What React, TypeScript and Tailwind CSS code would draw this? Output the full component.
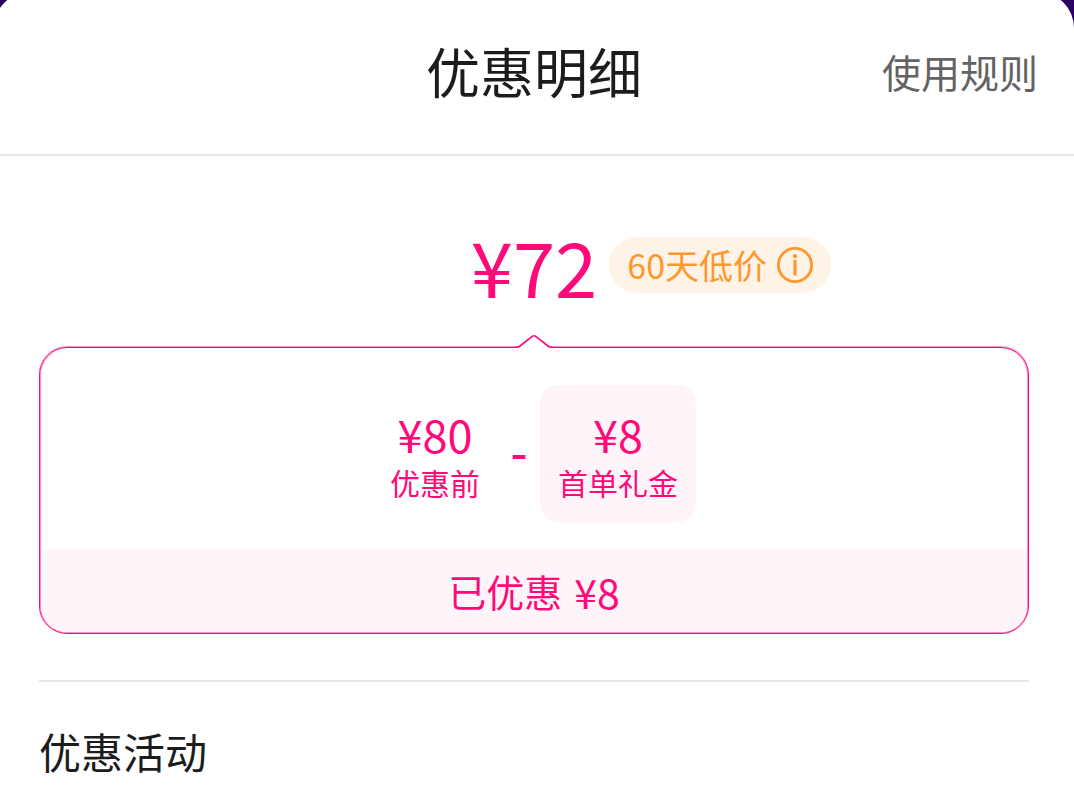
const cjk = "font-['Noto_Sans_CJK_SC','Noto_Sans',sans-serif]";

function InfoIcon() {
  return (
    <svg viewBox="0 0 36 36" className="size-9" fill="none" stroke="#ff982c" aria-hidden="true">
      <circle cx="18" cy="18" r="16.6" strokeWidth="2.8" />
      <path d="M18 14v13.200" strokeWidth="3.2" strokeLinecap="round" />
      <circle cx="18" cy="9.200" r="2.1" fill="#ff982c" stroke="none" />
    </svg>
  );
}

function PriceItem({ amount, label, active }: { amount: string; label: string; active?: boolean }) {
  return (
    <div
      className={`flex flex-col items-center rounded-[18px] px-[18px] pt-[23px] pb-[18px] ${
        active ? "bg-[#fff4fa]" : ""
      }`}
    >
      <span className="text-[45px] leading-[52px]">{amount}</span>
      <span className="text-[30px] leading-[44px]">{label}</span>
    </div>
  );
}

export default function App() {
  return (
    <div className={`flex min-h-screen flex-col overflow-hidden bg-[#2c0062] ${cjk}`}>
      <main className="-mt-2 -ml-1.5 grow rounded-t-[36px] bg-white pt-2 pl-1.5 text-[#1c1c1c]">
        <header className="grid h-[156px] grid-cols-[1fr_auto_1fr] items-center border-b-2 border-[#e6e6e6] pr-1.5 pb-3">
          <h1 className="col-start-2 text-[54px] leading-[64px]">优惠明细</h1>
          <a href="#rules" className="mr-[30px] justify-self-end text-[39px] leading-[48px] text-[#636363]">
            使用规则
          </a>
        </header>

        <section className="pt-[66px] pr-[45px] pl-[39px] text-[#ff0a78]">
          <div className="grid grid-cols-[1fr_auto_1fr] items-center">
            <strong className="col-start-2 text-[76px] leading-[86px] font-normal">¥72</strong>
            <button
              type="button"
              className="ml-3 flex h-14 items-center gap-2.5 justify-self-start rounded-full bg-[#fff3e8] px-[18px] text-[34px] leading-[48px] text-[#ff982c]"
            >
              60天低价
              <InfoIcon />
            </button>
          </div>

          <div className="relative mt-[39px] rounded-[28px] border border-[#f5097c] shadow-[0_-1px_0_#ff8fc2,inset_1px_0_0_#ff8fc2,inset_-1px_0_0_#ff8fc2,inset_0_-1px_0_#ff8fc2]">
            <svg
              viewBox="0 0 36 14"
              className="absolute -top-[14px] left-1/2 h-[14px] w-9 -translate-x-1/2"
              fill="none"
              aria-hidden="true"
            >
              <path d="M1 14V12L18 1 35 12V14Z" fill="white" />
              <path
                d="M0 13.200H1Q2.500 13.100 4 12L16.600 2.200Q18 1.200 19.400 2.200L32 12Q33.500 13.100 35 13.200H36"
                stroke="#f5097c"
                strokeWidth="1.6"
              />
            </svg>
            <div className="flex items-center justify-center pt-[37px] pb-7">
              <PriceItem amount="¥80" label="优惠前" />
              <span className="w-[42px] pb-2 text-center text-[48px] leading-[52px] font-medium">-</span>
              <PriceItem amount="¥8" label="首单礼金" active />
            </div>
            <p className="mx-px mb-px flex h-[82px] items-center justify-center gap-3 rounded-b-[26px] bg-[#fff4fa] text-[38px] leading-[50px]">
              <span>已优惠</span>
              <span className="text-[41px]">¥8</span>
            </p>
          </div>
        </section>

        <section className="mt-[46px] mr-[45px] ml-[39px] border-t-2 border-[#e6e6e6] pt-[42px]">
          <h2 className="text-[42px] leading-[54px]">优惠活动</h2>
        </section>
      </main>
    </div>
  );
}
